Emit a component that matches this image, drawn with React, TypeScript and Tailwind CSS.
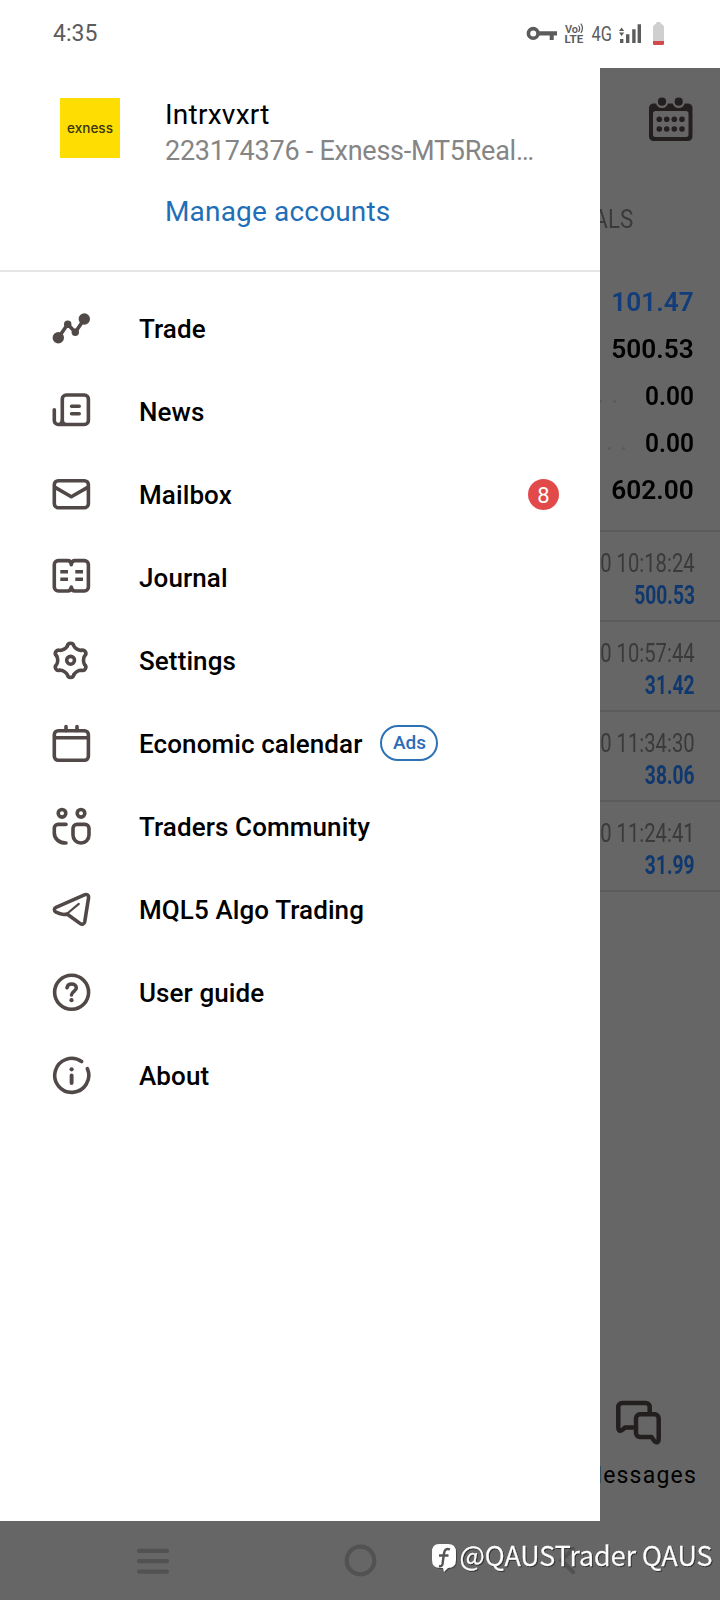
import type { ReactNode } from 'react';

interface MenuItem {
  label: string;
  icon: ReactNode;
  badge?: string;
  tag?: string;
}

const menuItems: MenuItem[] = [
  {
    label: 'Trade',
    icon: (
      <>
        <path d="M6.3 29.7 15.7 16.3 23.3 24.3 32.3 11" />
        <g fill="currentColor" stroke="none">
          <circle cx="6.3" cy="29.7" r="5.7" />
          <circle cx="15.7" cy="16.3" r="3.7" />
          <circle cx="23.3" cy="24.3" r="3.7" />
          <circle cx="32.3" cy="11" r="5.7" />
        </g>
      </>
    ),
  },
  {
    label: 'News',
    icon: (
      <>
        <rect x="10.3" y="4" width="26.1" height="29.5" rx="4" />
        <path d="M2.3 18.7V29.5a4 4 0 0 0 8 0M6.3 33.5h7M19.6 15.3h7.6M19.6 22.7h7.6" />
      </>
    ),
  },
  {
    label: 'Mailbox',
    badge: '8',
    icon: (
      <>
        <rect x="2.3" y="6.7" width="34.1" height="27" rx="4" />
        <path d="M3.5 13.6 19.3 22.7 35.2 13.6" />
      </>
    ),
  },
  {
    label: 'Journal',
    icon: (
      <>
        <path d="M19.3 7.6c-.2-2.4-1.4-4-3.6-4H6.3a4 4 0 0 0-4 4V30a4 4 0 0 0 4 4h9.4c2.2 0 3.4-1.6 3.6-4 .2 2.4 1.4 4 3.6 4h9.5a4 4 0 0 0 4-4V7.6a4 4 0 0 0-4-4h-9.5c-2.2 0-3.4 1.6-3.6 4z" />
        <path strokeLinecap="butt" d="M8.3 14.7H16M8.3 22.3H16M23.3 14.7H31M23.3 22.3H31" />
      </>
    ),
  },
  {
    label: 'Settings',
    icon: (
      <g transform="translate(18.6 20.3)">
        {[0, 60, 120, 180, 240, 300].map((angle) => (
          <path
            key={angle}
            transform={`rotate(${angle})`}
            d="M-3.2-14.4A3.25 3.25 0 0 1 3.2-14.4C4.2-12 8.290-9.640 10.87-9.97"
          />
        ))}
        <circle r="3.9" />
      </g>
    ),
  },
  {
    label: 'Economic calendar',
    tag: 'Ads',
    icon: (
      <>
        <rect x="2.3" y="7.7" width="34.1" height="29.6" rx="4" />
        <path d="M3 14.7h33M14 3.6v4M25 3.6v4" />
      </>
    ),
  },
  {
    label: 'Traders Community',
    icon: (
      <>
        <circle cx="10" cy="7.3" r="3.8" />
        <circle cx="29" cy="7.3" r="3.8" />
        <path d="M14 18.4H6a3.7 3.7 0 0 0-3.7 3.7V27c0 6 5 10 11.7 10" />
        <path d="M25 18.4h8a4 4 0 0 1 4 4V29a8 8 0 0 1-16 0v-6.6a4 4 0 0 1 4-4z" />
      </>
    ),
  },
  {
    label: 'MQL5 Algo Trading',
    icon: (
      <>
        <path d="M4 18.3 33 5.7c2-.8 3.9.6 3.6 2.7L32.7 33c-.4 2-2.6 2.9-4.4 1.6L15 25C12 26 8.5 25.5 4 23.2 1.8 22 1.9 19.2 4 18.3z" />
        <path strokeWidth="2.2" d="M14.7 25 26.8 14.9" />
      </>
    ),
  },
  {
    label: 'User guide',
    icon: (
      <>
        <circle cx="19.6" cy="20.3" r="17" />
        <path d="M15 15.8c.4-2.4 2.1-3.8 4.6-3.8 2.8 0 4.7 1.5 4.7 3.9 0 3.3-4.8 3.6-4.8 7.1" />
        <circle cx="19.5" cy="28.2" r="2.1" fill="currentColor" stroke="none" />
      </>
    ),
  },
  {
    label: 'About',
    icon: (
      <>
        <path d="M29.6 6.5A17 17 0 1 0 35.4 13.7" />
        <path strokeWidth="3.9" d="M19.6 20.5v7.6" />
        <circle cx="19.6" cy="14.3" r="2.1" fill="currentColor" stroke="none" />
      </>
    ),
  },
];

const totals = [
  { value: '101.47', style: 'scale-x-[1.01] text-[#123d7a]' },
  { value: '500.53', style: 'scale-x-[1.01] text-black' },
  { value: '0.00', style: 'scale-x-[0.94] text-black', dots: 'pr-[26px]' },
  { value: '0.00', style: 'scale-x-[0.94] text-black', dots: 'pr-[17px]' },
  { value: '602.00', style: 'scale-x-[1.01] text-black' },
];

const deals = [
  { time: '0 10:18:24', amount: '500.53' },
  { time: '0 10:57:44', amount: '31.42' },
  { time: '0 11:34:30', amount: '38.06' },
  { time: '0 11:24:41', amount: '31.99' },
];

function StatusBar() {
  return (
    <header className="flex h-[68px] items-center justify-between bg-white pl-[53px] text-[#5c5c5c]">
      <span className="pb-0.5 text-[23px] leading-none">4:35</span>
      <svg className="h-[68px] w-[200px]" viewBox="520 0 200 68" fill="none">
        <circle cx="533.2" cy="33.4" r="4.8" stroke="currentColor" strokeWidth="3.6" />
        <path d="M538 31.3h19v4.2h-3.3v4.6h-4v-4.6H538z" fill="currentColor" />
        <text x="565" y="32.5" fontSize="11" fontWeight="600" fill="currentColor" textLength="13">Vo</text>
        <path d="M578.5 25.5q2.4 3 0 6.4M580.8 23.6q3.4 4.6 0 9.4" stroke="currentColor" strokeWidth="1.2" />
        <text x="564.6" y="43" fontSize="11.5" fontWeight="700" fill="currentColor" textLength="18.5">LTE</text>
        <text x="591.5" y="41" fontSize="20.5" fill="currentColor" textLength="20.5" lengthAdjust="spacingAndGlyphs">4G</text>
        <path d="M620 39h3.4v4H620zM626 34.3h3.4V43H626zM632.2 29.3h3.4V43h-3.4zM637.6 24.3h3.4V43h-3.4z" fill="currentColor" />
        <path d="m621.6 27.6 2.6 3.4h-5.2zM621.6 36l2.6-3.4h-5.2z" fill="currentColor" />
        <path d="M653 27q0-2 2.5-3l1.5-2h3l1.5 2q2.5 1 2.5 3v14h-11z" fill="#cfcfcf" />
        <path d="M653 41h11v2.5q0 1.5-1.5 1.5h-8q-1.5 0-1.5-1.5z" fill="#d2494b" />
      </svg>
    </header>
  );
}

function AccountHeader() {
  return (
    <div className="flex h-[204px] border-b-2 border-[#e6e6e6] pt-[29px] pl-[60px]">
      <div className="mt-px flex size-[60px] items-center justify-center bg-[#fddd02]">
        <svg className="h-6 w-[50px]" viewBox="0 0 50 24">
          <text x="2" y="16.5" fontSize="13.5" fontWeight="500" fontFamily="Inter, sans-serif" fill="#3a3410" textLength="46" lengthAdjust="spacingAndGlyphs">
            exness
          </text>
        </svg>
      </div>
      <div className="flex flex-col pl-[45px] leading-[35px] whitespace-nowrap">
        <span className="text-[28px] tracking-[0.25px] text-black">Intrxvxrt</span>
        <span className="pt-0.5 text-[27px] tracking-[-0.25px] text-[#858585]">223174376 - Exness-MT5Real…</span>
        <a className="mt-[25px] text-[28px] tracking-[0.17px] text-[#1f6fb8]">Manage accounts</a>
      </div>
    </div>
  );
}

function MenuRow({ label, icon, badge, tag }: MenuItem) {
  return (
    <li className="flex h-[83px] items-center pr-[41px] pl-[52px]">
      <svg
        className="h-[41px] w-10 text-[#514947]"
        viewBox="0 0 40 41"
        fill="none"
        stroke="currentColor"
        strokeWidth="3.6"
        strokeLinecap="round"
        strokeLinejoin="round"
      >
        {icon}
      </svg>
      <span className="pl-[47px] text-[26px] leading-none font-medium tracking-[0.1px] text-black">{label}</span>
      {tag && (
        <span className="mb-0.5 ml-[18px] flex h-9 w-[58px] items-center justify-center rounded-full border-2 border-[#2d72b5] pt-0.5 text-[19px] font-medium text-[#2a6cb8]">
          {tag}
        </span>
      )}
      {badge && (
        <span className="ml-auto flex size-[31px] items-center justify-center rounded-full bg-[#e24a4a] pt-px text-[22px] text-white">
          {badge}
        </span>
      )}
    </li>
  );
}

function HistoryPane() {
  return (
    <aside className="flex w-[120px] flex-col overflow-hidden bg-[#666]">
      <div className="flex h-[111px] justify-end pt-[24px] pr-[26px]">
        <svg className="h-[52px] w-[46px] text-[#231f1f]" viewBox="648 92 46 52" fill="currentColor">
          <rect x="649" y="103.5" width="43.5" height="37.5" rx="4.5" />
          <rect x="653" y="111" width="35.5" height="26" rx="2.5" fill="#666" />
          <g stroke="#666" strokeWidth="2.2">
            <circle cx="662" cy="101.7" r="5.2" />
            <circle cx="678.7" cy="101.7" r="5.2" />
          </g>
          {[659.3, 666.7, 674.3, 682].map((x) => (
            <g key={x}>
              <circle cx={x} cy="119.3" r="2.8" />
              <circle cx={x} cy="129" r="2.8" />
            </g>
          ))}
        </svg>
      </div>
      <div className="flex h-20 w-[33px] items-center justify-end">
        <span className="origin-right scale-x-[0.86] text-[26px] text-[#3a3a3a]">DEALS</span>
      </div>
      <div className="flex h-[273px] flex-col border-b-2 border-[#5b5b5b] pt-[20px] pr-[26px]">
        {totals.map(({ value, style, dots }, i) => (
          <div key={i} className="flex h-[47px] items-center justify-end">
            {dots && (
              <span className={`flex gap-[11px] pt-2.5 ${dots}`}>
                <i className="size-[3px] rounded-full bg-[#5a5a5a]" />
                <i className="size-[3px] rounded-full bg-[#5a5a5a]" />
              </span>
            )}
            <span className={`origin-right text-[26px] font-semibold ${style}`}>{value}</span>
          </div>
        ))}
      </div>
      {deals.map(({ time, amount }) => (
        <div
          key={time}
          className="flex h-[90px] flex-col items-end border-b-2 border-[#5b5b5b] pt-[16px] pr-[25px] text-[25px] leading-[32px] whitespace-nowrap"
        >
          <span className="origin-right scale-x-[0.81] text-[#3a3a3a]">{time}</span>
          <span className="origin-right scale-x-[0.77] font-bold text-[#10386f]">{amount}</span>
        </div>
      ))}
      <div className="mt-auto flex h-[123px] flex-col items-end pr-[23px]">
        <svg
          className="mr-[35px] h-[48px] w-[48px] text-[#241f1f]"
          viewBox="614 1398 48 48"
          fill="none"
          stroke="currentColor"
          strokeWidth="4.5"
          strokeLinejoin="round"
          strokeLinecap="round"
        >
          <path d="M649.7 1412v-5a4 4 0 0 0-4-4h-23.4a4 4 0 0 0-4 4v20.5c0 3.5 2.3 4 4.2 2.2l2.5-2.2h8" />
          <path d="M640 1414.3h14.7a4 4 0 0 1 4 4V1439c0 3.5-2.3 4-4.2 2.2l-3-4.2H640a4 4 0 0 1-4-4v-14.7a4 4 0 0 1 4-4z" />
        </svg>
        <span className="pt-[13px] text-[23px] leading-[34px] font-[450] tracking-[1.2px] text-black">Messages</span>
      </div>
    </aside>
  );
}

function NavigationBar() {
  return (
    <footer className="relative h-[79px] bg-[#666]">
      <svg className="h-[79px] w-full" viewBox="0 0 720 79" fill="none" stroke="#525252" strokeWidth="4.2" strokeLinecap="round">
        <path d="M139 29.8h28M139 40.2h28M139 50.6h28" />
        <circle cx="360.5" cy="39.5" r="13.8" />
        <path d="m573 28-11.5 11.5L573 51" />
      </svg>
      <div className="absolute top-[14px] right-[7px] flex items-center text-white">
        <svg className="mt-1 mr-0.5 h-8 w-[26px] [filter:drop-shadow(1px_1px_0_#444)]" viewBox="0 0 26 32">
          <path d="M8 3h9q8 0 8 8v8q0 8-8 8l-4 4-1-4H9q-8 0-8-8v-8q0-8 7-8z" fill="#fff" />
          <path d="M19 8.5c-4-1.5-5.5.5-6 4L11.5 23c-.4 2-1.5 2.5-3.5 2M8 14.5h9.5" stroke="#555" strokeWidth="2.4" fill="none" />
        </svg>
        <svg className="h-10 w-[254px] [filter:drop-shadow(1px_1px_0_#333)]" viewBox="0 0 254 40">
          <text x="0.5" y="31" fontSize="27" fontWeight="350" fontFamily="'Noto Sans CJK SC', 'Noto Sans', sans-serif" fill="#fff" stroke="#fff" strokeWidth="0.3" textLength="253" lengthAdjust="spacingAndGlyphs">
            @QAUSTrader QAUS
          </text>
        </svg>
      </div>
    </footer>
  );
}

export default function App() {
  return (
    <div className="flex h-[1600px] w-[720px] flex-col overflow-hidden bg-white font-[Roboto,sans-serif]">
      <StatusBar />
      <main className="flex h-[1453px]">
        <section className="w-[600px] bg-white">
          <AccountHeader />
          <ul className="pt-[15px]">
            {menuItems.map((item) => (
              <MenuRow key={item.label} {...item} />
            ))}
          </ul>
        </section>
        <HistoryPane />
      </main>
      <NavigationBar />
    </div>
  );
}
